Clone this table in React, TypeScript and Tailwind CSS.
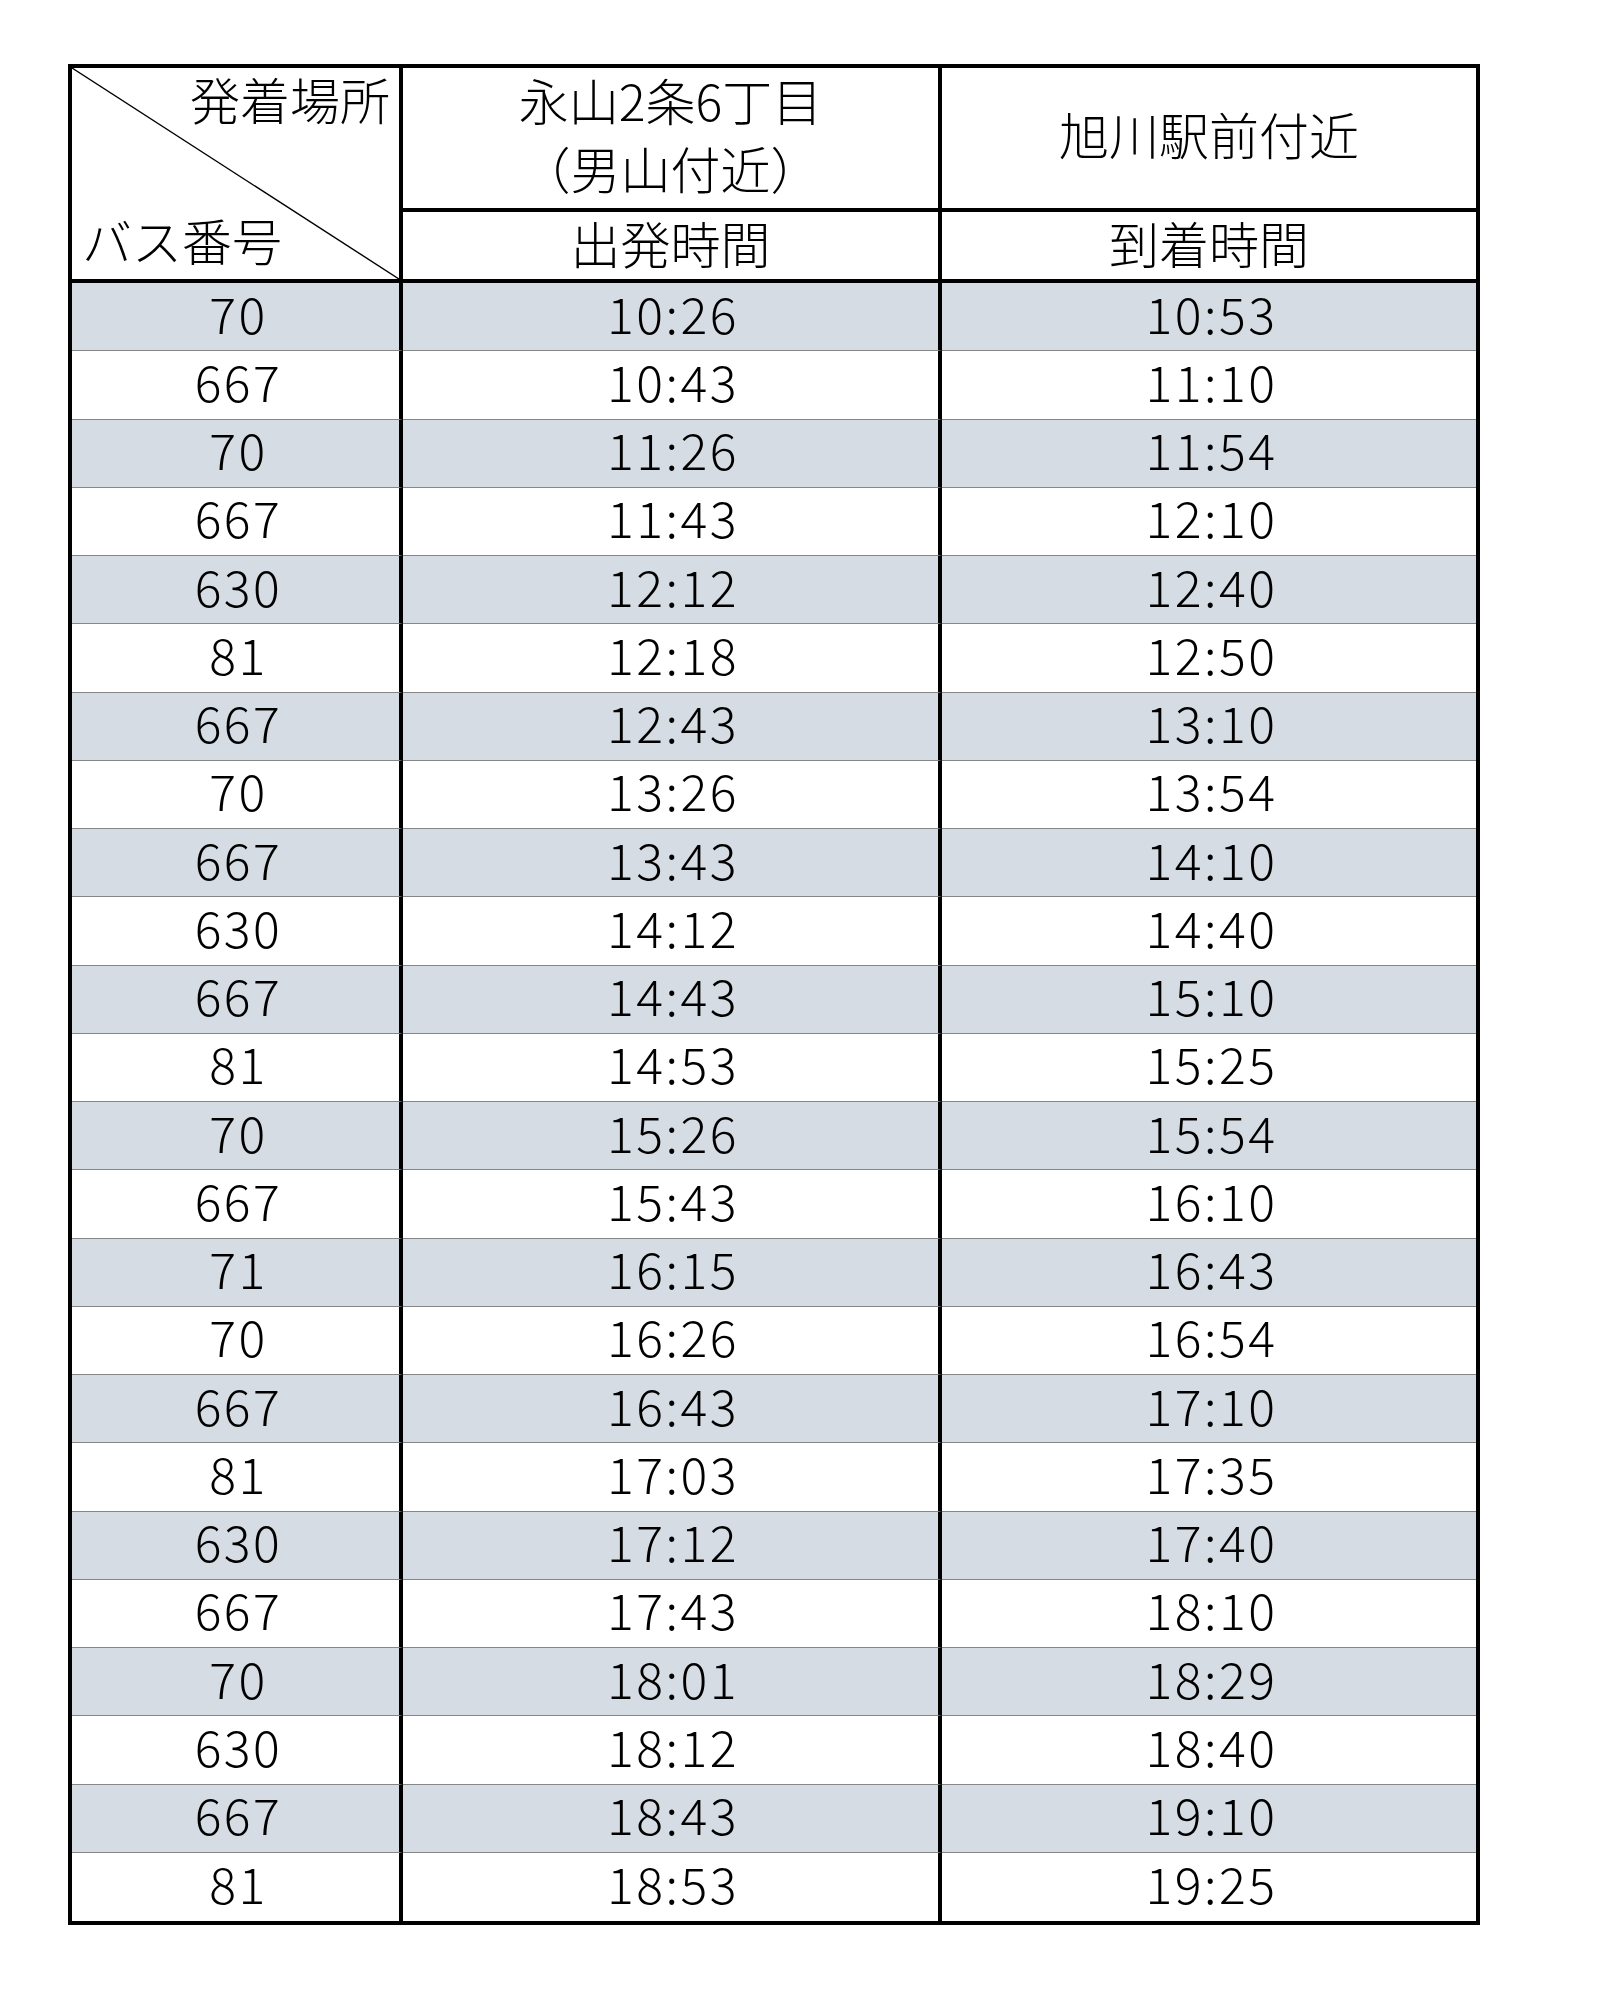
import React from "react";

type Row = { bus: string; depart: string; arrive: string };

const rows: Row[] = [
  { bus: "70", depart: "10:26", arrive: "10:53" },
  { bus: "667", depart: "10:43", arrive: "11:10" },
  { bus: "70", depart: "11:26", arrive: "11:54" },
  { bus: "667", depart: "11:43", arrive: "12:10" },
  { bus: "630", depart: "12:12", arrive: "12:40" },
  { bus: "81", depart: "12:18", arrive: "12:50" },
  { bus: "667", depart: "12:43", arrive: "13:10" },
  { bus: "70", depart: "13:26", arrive: "13:54" },
  { bus: "667", depart: "13:43", arrive: "14:10" },
  { bus: "630", depart: "14:12", arrive: "14:40" },
  { bus: "667", depart: "14:43", arrive: "15:10" },
  { bus: "81", depart: "14:53", arrive: "15:25" },
  { bus: "70", depart: "15:26", arrive: "15:54" },
  { bus: "667", depart: "15:43", arrive: "16:10" },
  { bus: "71", depart: "16:15", arrive: "16:43" },
  { bus: "70", depart: "16:26", arrive: "16:54" },
  { bus: "667", depart: "16:43", arrive: "17:10" },
  { bus: "81", depart: "17:03", arrive: "17:35" },
  { bus: "630", depart: "17:12", arrive: "17:40" },
  { bus: "667", depart: "17:43", arrive: "18:10" },
  { bus: "70", depart: "18:01", arrive: "18:29" },
  { bus: "630", depart: "18:12", arrive: "18:40" },
  { bus: "667", depart: "18:43", arrive: "19:10" },
  { bus: "81", depart: "18:53", arrive: "19:25" },
];

export default function App() {
  return (
    <div
      className="min-h-screen bg-white pl-[68px] pt-[64px] text-black font-light"
      style={{ fontFamily: '"Noto Sans CJK JP", "Noto Sans", sans-serif' }}
    >
      <div className="w-[1412px] border-4 border-black">
        {/* header */}
        <div className="flex h-[215px] border-b-4 border-black">
          <div className="relative flex w-[331px] flex-col justify-between border-r-4 border-black pt-[5px] pb-[15px] pl-[10px] pr-[9px] text-[50px] leading-none">
            <svg
              className="absolute inset-0 h-full w-full"
              viewBox="0 0 327 211"
              preserveAspectRatio="none"
            >
              <line
                x1="0"
                y1="0"
                x2="327"
                y2="211"
                stroke="#000"
                strokeWidth="1.4"
                vectorEffect="non-scaling-stroke"
              />
            </svg>
            <div className="relative text-right">発着場所</div>
            <div className="relative text-left">バス番号</div>
          </div>
          <div className="flex w-[539px] flex-col border-r-4 border-black text-[50px]">
            <div className="flex h-[144px] flex-col items-center justify-center border-b-4 border-black pb-[10px] leading-[68px]">
              <div>永山2条6丁目</div>
              <div>（男山付近）</div>
            </div>
            <div className="flex flex-1 items-center justify-center pb-[8px] leading-none">
              出発時間
            </div>
          </div>
          <div className="flex flex-1 flex-col text-[50px]">
            <div className="flex h-[144px] items-center justify-center border-b-4 border-black pb-[10px] leading-none">
              旭川駅前付近
            </div>
            <div className="flex flex-1 items-center justify-center pb-[8px] leading-none">
              到着時間
            </div>
          </div>
        </div>

        {/* body */}
        {rows.map((r, i) => {
          const shade = i % 2 === 0 ? "bg-[#d6dce4]" : "bg-white";
          const last = i === rows.length - 1;
          const line = last ? "" : "border-b border-b-[#868686]";
          return (
            <div
              key={i}
              className={`flex h-[68.25px] text-[50px] leading-none tracking-[2.5px] ${shade}`}
            >
              <div className={`flex w-[331px] items-center justify-center border-r-4 border-r-black pb-[10px] pl-[6px] ${line}`}>
                {r.bus}
              </div>
              <div className={`flex w-[539px] items-center justify-center border-r-4 border-r-black pb-[10px] pl-[5px] ${line}`}>
                {r.depart}
              </div>
              <div className={`flex flex-1 items-center justify-center pb-[10px] pl-[5px] ${line}`}>
                {r.arrive}
              </div>
            </div>
          );
        })}
      </div>
    </div>
  );
}
